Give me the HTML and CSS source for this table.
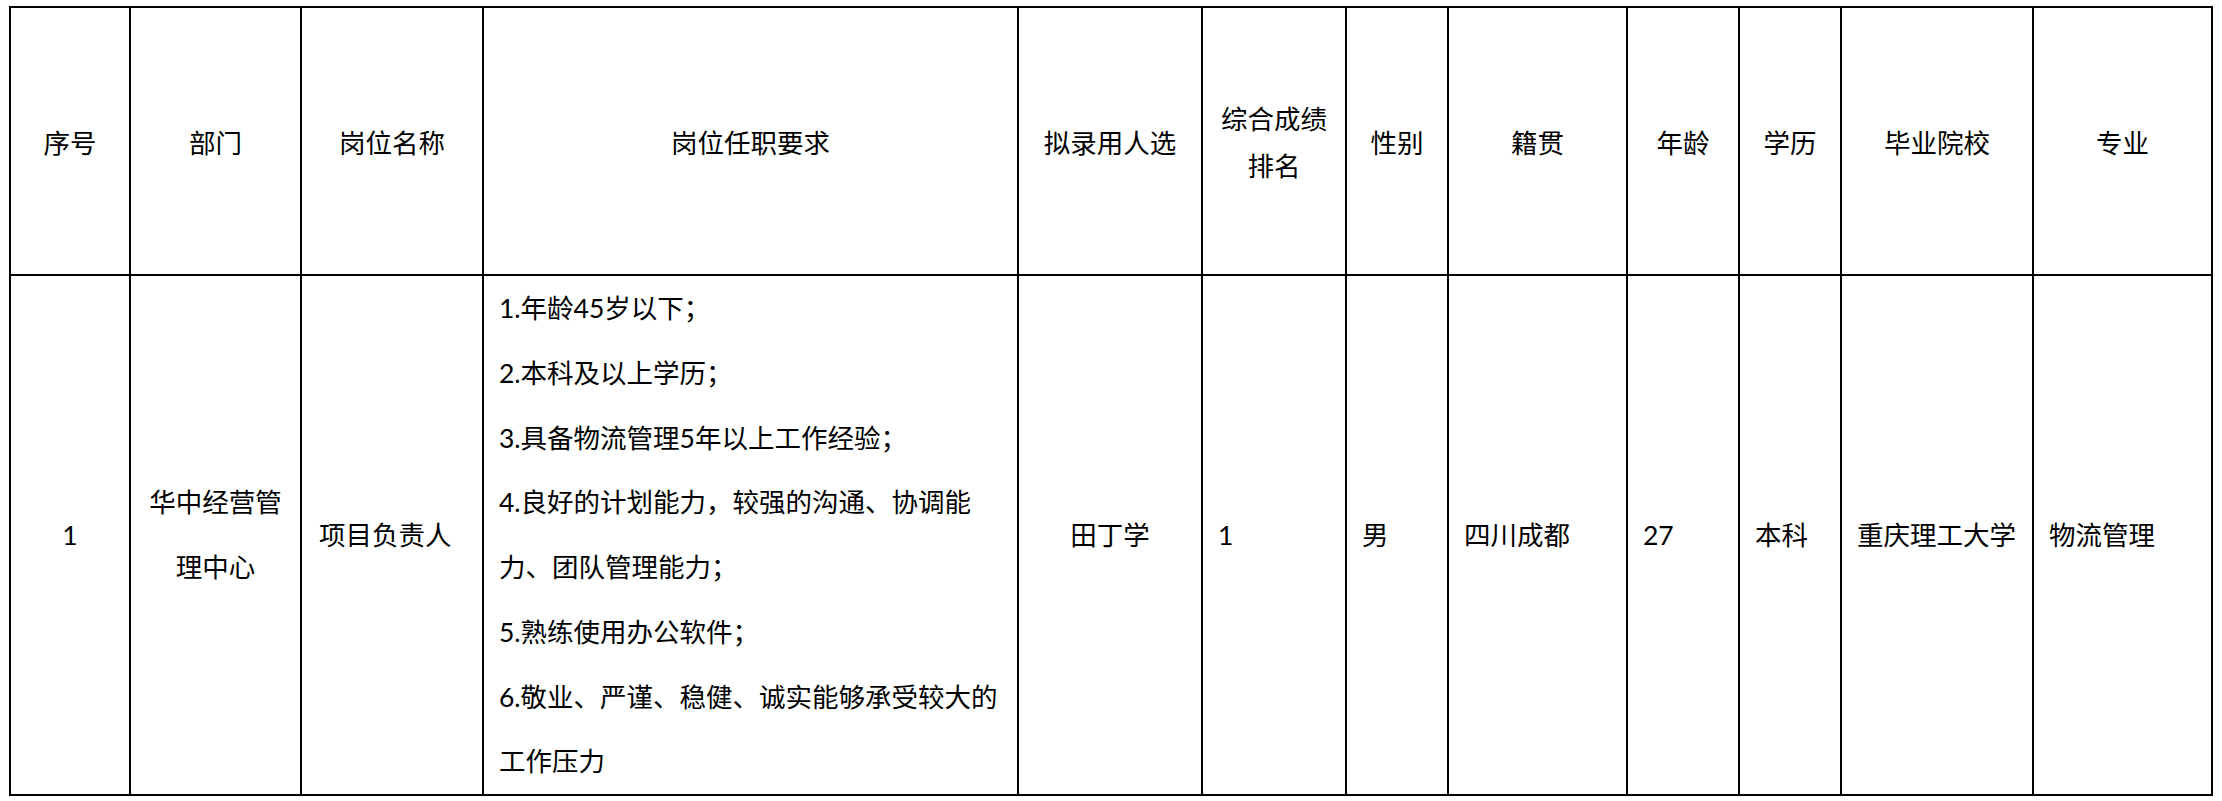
FILE: index.html
```html
<!DOCTYPE html>
<html lang="zh-CN">
<head>
<meta charset="utf-8">
<title>拟录用人员公示</title>
<link rel="stylesheet" href="styles.css">
</head>
<body>
<table class="grid">
  <colgroup>
    <col class="c1"><col class="c2"><col class="c3"><col class="c4"><col class="c5"><col class="c6">
    <col class="c7"><col class="c8"><col class="c9"><col class="c10"><col class="c11"><col class="c12">
  </colgroup>
  <thead>
    <tr class="head">
      <th>序号</th>
      <th>部门</th>
      <th>岗位名称</th>
      <th>岗位任职要求</th>
      <th>拟录用人选</th>
      <th>综合成绩<br>排名</th>
      <th>性别</th>
      <th>籍贯</th>
      <th>年龄</th>
      <th>学历</th>
      <th>毕业院校</th>
      <th>专业</th>
    </tr>
  </thead>
  <tbody>
    <tr class="body">
      <td class="center">1</td>
      <td class="center">华中经营管<br>理中心</td>
      <td class="left pos">项目负责人</td>
      <td class="left req">
        <div>1.年龄45岁以下；</div>
        <div>2.本科及以上学历；</div>
        <div>3.具备物流管理5年以上工作经验；</div>
        <div>4.良好的计划能力，较强的沟通、协调能<br>力、团队管理能力；</div>
        <div>5.熟练使用办公软件；</div>
        <div>6.敬业、严谨、稳健、诚实能够承受较大的<br>工作压力</div>
      </td>
      <td class="center">田丁学</td>
      <td class="left">1</td>
      <td class="left">男</td>
      <td class="left">四川成都</td>
      <td class="left">27</td>
      <td class="left">本科</td>
      <td class="left">重庆理工大学</td>
      <td class="left">物流管理</td>
    </tr>
  </tbody>
</table>
</body>
</html>
```

FILE: styles.css
```css
html, body {
  margin: 0;
  padding: 0;
  background: #ffffff;
}

body {
  padding: 6px 0 0 9px;
  font-family: Lato, "Noto Sans CJK SC", sans-serif;
  color: #000000;
}

.grid {
  border-collapse: separate;
  border-spacing: 0;
  table-layout: fixed;
  width: 2204px;
  border-top: 2px solid #000;
  border-left: 2px solid #000;
}

.c1 { width: 120px; }
.c2 { width: 171px; }
.c3 { width: 182px; }
.c4 { width: 535px; }
.c5 { width: 184px; }
.c6 { width: 144px; }
.c7 { width: 102px; }
.c8 { width: 179px; }
.c9 { width: 112px; }
.c10 { width: 102px; }
.c11 { width: 192px; }
.c12 { width: 179px; }

.grid th,
.grid td {
  box-sizing: border-box;
  border-right: 2px solid #000;
  border-bottom: 2px solid #000;
  vertical-align: middle;
  font-size: 26.5px;
  padding: 0 6px;
  overflow: hidden;
}

.head th {
  height: 268px;
  font-weight: 400;
  line-height: 47px;
  text-align: center;
  font-family: "Noto Sans CJK SC", sans-serif;
}

.body td {
  height: 520px;
  line-height: 64.75px;
  font-weight: 400;
}

.center {
  text-align: center;
}

.left {
  text-align: left;
  padding-left: 15px !important;
  white-space: nowrap;
}

.pos {
  padding-left: 17px !important;
}

.req div {
  white-space: nowrap;
}
```
